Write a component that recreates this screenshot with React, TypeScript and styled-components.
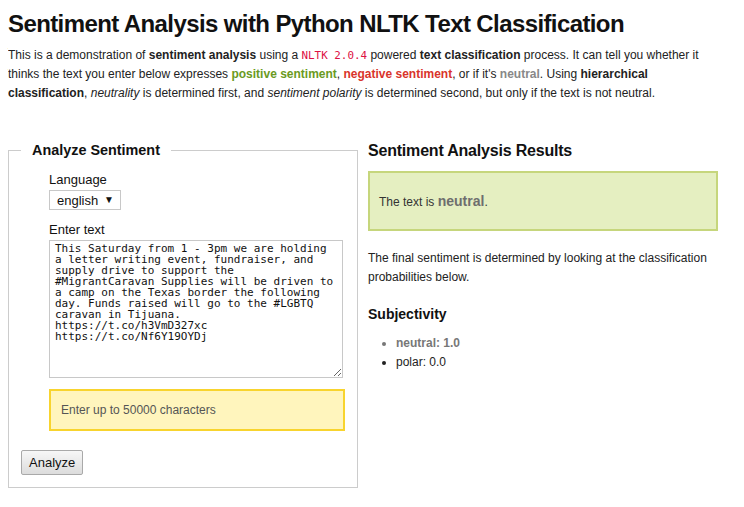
import React from "react";
import styled, { createGlobalStyle } from "styled-components";

const Global = createGlobalStyle`
  body {
    margin: 8px;
    font-family: "Liberation Sans", Arial, sans-serif;
    color: #222;
    background: #fff;
  }
`;

const Page = styled.div`
  width: 710px;
`;

const Title = styled.h1`
  margin: 2px 0 8px;
  font-size: 24px;
  letter-spacing: -0.6px;
  font-weight: bold;
  color: #111;
  line-height: normal;
`;

const Intro = styled.p`
  margin: 0;
  font-size: 12px;
  line-height: 19px;
`;

const Code = styled.code`
  font-family: "DejaVu Sans Mono", "Liberation Mono", monospace;
  font-size: 10.9px;
  color: #dd1144;
`;

const Tone = styled.strong<{ $tone: "pos" | "neg" | "neu" }>`
  color: ${(p) => (p.$tone === "pos" ? "#6a9a23" : p.$tone === "neg" ? "#d9342b" : "#888")};
`;

const Columns = styled.div`
  display: flex;
  gap: 10px;
  align-items: flex-start;
  margin-top: 39px;
`;

const Fieldset = styled.fieldset`
  box-sizing: border-box;
  width: 350px;
  margin: 0;
  border: 1px solid #ccc;
  padding: 14px 12px 12px;
`;

const Legend = styled.legend`
  padding: 0 11px;
  font-size: 14.4px;
  font-weight: bold;
  color: #111;
`;

const FormColumn = styled.div`
  margin-left: 28px;
  width: 296px;
  display: flex;
  flex-direction: column;
  align-items: flex-start;
`;

const Label = styled.label`
  display: block;
  font-size: 13px;
  color: #111;
  margin-bottom: 3px;
`;

const SelectWrap = styled.span`
  position: relative;
  display: inline-block;
  margin-bottom: 12px;
`;

const Select = styled.select`
  appearance: none;
  box-sizing: border-box;
  width: 72px;
  height: 20px;
  border: 1px solid #c8c8c8;
  border-radius: 0;
  background: #fff;
  padding: 0 0 0 7px;
  font-family: "Liberation Sans", Arial, sans-serif;
  font-size: 13px;
  color: #111;
  outline: none;
`;

const Arrow = styled.span`
  position: absolute;
  right: 7px;
  top: 5px;
  font-size: 10px;
  line-height: 10px;
  color: #111;
  pointer-events: none;
`;

const TextArea = styled.textarea`
  box-sizing: border-box;
  width: 294px;
  height: 138px;
  border: 1px solid #c8c8c8;
  padding: 2px 5px;
  margin: 0;
  font-family: "DejaVu Sans Mono", "Liberation Mono", monospace;
  font-size: 11px;
  line-height: 11px;
  color: #111;
  resize: both;
  overflow: hidden;
`;

const Notice = styled.div`
  box-sizing: border-box;
  width: 296px;
  margin-top: 11px;
  border: 2px solid #f8d42e;
  background: #fff5bd;
  padding: 12px 10px;
  font-size: 12px;
  line-height: 14px;
  color: #555;
`;

const Button = styled.button`
  margin-top: 19px;
  box-sizing: border-box;
  height: 25px;
  padding: 0 7px;
  border: 1px solid #a9a9a9;
  border-radius: 2px;
  background: linear-gradient(#f7f7f7, #dcdcdc);
  font-family: "Liberation Sans", Arial, sans-serif;
  font-size: 13px;
  color: #111;
`;

const Results = styled.div`
  width: 350px;
`;

const ResultsTitle = styled.h3`
  margin: 0 0 11px;
  font-size: 16px;
  letter-spacing: -0.2px;
  font-weight: bold;
  color: #111;
  line-height: normal;
`;

const Verdict = styled.div`
  box-sizing: border-box;
  border: 2px solid #c6d67c;
  background: #e5efc1;
  padding: 20px 9px 19px;
  font-size: 12px;
  line-height: 16px;
  color: #333;
`;

const VerdictWord = styled.strong`
  font-size: 14px;
  color: #6e6e6e;
`;

const Explain = styled.p`
  margin: 18px 0 0;
  font-size: 12px;
  line-height: 19px;
`;

const SubTitle = styled.h4`
  margin: 19px 0 0;
  font-size: 14px;
  font-weight: bold;
  color: #111;
  line-height: 16px;
`;

const List = styled.ul`
  margin: 12px 0 0;
  padding-left: 28px;
  font-size: 12px;
  line-height: 19px;
`;

const Item = styled.li<{ $top?: boolean }>`
  color: ${(p) => (p.$top ? "#777" : "#222")};
  font-weight: ${(p) => (p.$top ? "bold" : "normal")};
`;

const sample =
  "This Saturday from 1 - 3pm we are holding a letter writing event, fundraiser, and supply drive to support the #MigrantCaravan Supplies will be driven to a camp on the Texas border the following day. Funds raised will go to the #LGBTQ caravan in Tijuana. https://t.co/h3VmD327xc https://t.co/Nf6Y19OYDj";

export default function App() {
  return (
    <Page>
      <Global />
      <Title>Sentiment Analysis with Python NLTK Text Classification</Title>
      <Intro>
        This is a demonstration of <strong>sentiment analysis</strong> using a <Code>NLTK 2.0.4</Code> powered{" "}
        <strong>text classification</strong> process. It can tell you whether it thinks the text you enter below
        expresses <Tone $tone="pos">positive sentiment</Tone>, <Tone $tone="neg">negative sentiment</Tone>, or if
        it's <Tone $tone="neu">neutral</Tone>. Using <strong>hierarchical classification</strong>, <em>neutrality</em>{" "}
        is determined first, and <em>sentiment polarity</em> is determined second, but only if the text is not
        neutral.
      </Intro>
      <Columns>
        <Fieldset>
          <Legend>Analyze Sentiment</Legend>
          <FormColumn>
            <Label htmlFor="lang">Language</Label>
            <SelectWrap>
              <Select id="lang" defaultValue="english">
                <option value="english">english</option>
              </Select>
              <Arrow>▼</Arrow>
            </SelectWrap>
            <Label htmlFor="txt">Enter text</Label>
            <TextArea id="txt" defaultValue={sample} spellCheck={false} />
            <Notice>Enter up to 50000 characters</Notice>
          </FormColumn>
          <Button type="button">Analyze</Button>
        </Fieldset>
        <Results>
          <ResultsTitle>Sentiment Analysis Results</ResultsTitle>
          <Verdict>
            The text is <VerdictWord>neutral</VerdictWord>.
          </Verdict>
          <Explain>The final sentiment is determined by looking at the classification probabilities below.</Explain>
          <SubTitle>Subjectivity</SubTitle>
          <List>
            <Item $top>neutral: 1.0</Item>
            <Item>polar: 0.0</Item>
          </List>
        </Results>
      </Columns>
    </Page>
  );
}
